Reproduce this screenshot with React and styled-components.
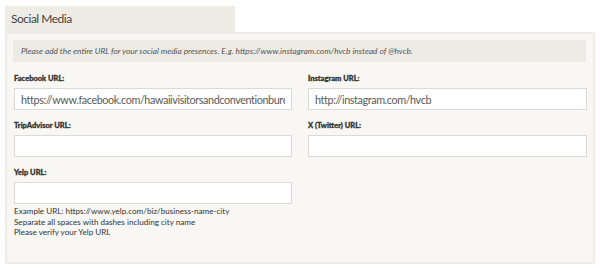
import styled, { createGlobalStyle } from "styled-components"

const Global = createGlobalStyle`
body {
  margin: 0;
  background: #ffffff;
  font-family: "Lato", "Open Sans", sans-serif;
}
`

const Page = styled.div`
padding: 6px 5px 0;
`

const Tab = styled.div`
width: 224px;
height: 26px;
padding-left: 6px;
background: #efece6;
color: #444;
font-family: "Lato", sans-serif;
font-size: 12px;
letter-spacing: -0.5px;
line-height: 26px;
`

const Panel = styled.div`
border: 2px solid #efece7;
background: #f8f7f4;
padding: 6px 7px 0 6px;
box-sizing: border-box;
height: 232px;
`

const Note = styled.div`
height: 22px;
background: #eeebe5;
color: #555;
font-family: "Lato", sans-serif;
font-style: italic;
font-size: 8.3px;
line-height: 22px;
padding-left: 8px;
margin-bottom: 12px;
`

const Grid = styled.div`
display: grid;
grid-template-columns: 278px 279px;
column-gap: 16px;
row-gap: 11px;
padding-left: 1px;
`

const Field = styled.div`
display: flex;
flex-direction: column;
`

const Label = styled.label`
font-family: "Lato", sans-serif;
font-weight: 900;
font-size: 7.5px;
line-height: 10px;
color: #333;
-webkit-text-stroke: 0.3px #333;
margin-bottom: 4px;
`

const Input = styled.input`
box-sizing: border-box;
height: 22px;
width: 100%;
border: 1px solid #dcdad6;
background: #fff;
padding: 0 6px;
font-family: "Lato", sans-serif;
font-size: 10.8px;
letter-spacing: -0.4px;
color: #5a5a5a;
outline: none;
`

const Help = styled.div`
margin-top: 2px;
font-family: "Lato", sans-serif;
font-size: 8.1px;
line-height: 10.6px;
color: #333;
`

const fields = [
    { label: "Facebook URL:", value: "https://www.facebook.com/hawaiivisitorsandconventionbureau" },
    { label: "Instagram URL:", value: "http://instagram.com/hvcb" },
    { label: "TripAdvisor URL:", value: "" },
    { label: "X (Twitter) URL:", value: "" },
]

const App = () => {
    return (
        <Page>
            <Global />
            <Tab>Social Media</Tab>
            <Panel>
                <Note>Please add the entire URL for your social media presences. E.g. https://www.instagram.com/hvcb instead of @hvcb.</Note>
                <Grid>
                    {fields.map(f => (
                        <Field key={f.label}>
                            <Label>{f.label}</Label>
                            <Input defaultValue={f.value} />
                        </Field>
                    ))}
                    <Field>
                        <Label>Yelp URL:</Label>
                        <Input defaultValue="" />
                        <Help>
                            Example URL: https://www.yelp.com/biz/business-name-city<br />
                            Separate all spaces with dashes including city name<br />
                            Please verify your Yelp URL
                        </Help>
                    </Field>
                </Grid>
            </Panel>
        </Page>
    )
}

export default App
